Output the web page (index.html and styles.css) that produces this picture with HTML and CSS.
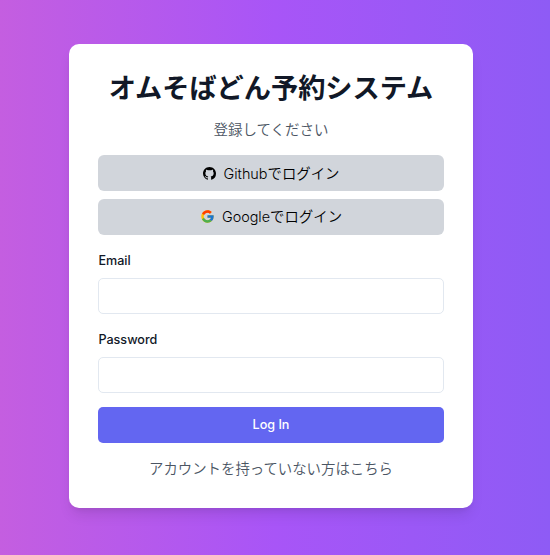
FILE: index.html
```html
<!DOCTYPE html>
<html lang="ja">
<head>
<meta charset="utf-8">
<title>オムそばどん予約システム</title>
<link rel="stylesheet" href="styles.css">
</head>
<body>
<main class="page">
  <section class="card">
    <h1 class="title">オムそばどん予約システム</h1>
    <p class="lead">登録してください</p>
    <div class="providers">
      <button class="btn provider" type="button">
        <svg class="icon" viewBox="0 0 16 16" aria-hidden="true"><path fill="#000" d="M8 0C3.58 0 0 3.58 0 8c0 3.54 2.29 6.53 5.47 7.59.4.07.55-.17.55-.38 0-.19-.01-.82-.01-1.49-2.01.37-2.53-.49-2.69-.94-.09-.23-.48-.94-.82-1.13-.28-.15-.68-.52-.01-.53.63-.01 1.08.58 1.23.82.72 1.21 1.87.87 2.33.66.07-.52.28-.87.51-1.07-1.78-.2-3.64-.89-3.64-3.95 0-.87.31-1.59.82-2.15-.08-.2-.36-1.02.08-2.12 0 0 .67-.21 2.2.82.64-.18 1.32-.27 2-.27s1.36.09 2 .27c1.53-1.04 2.2-.82 2.2-.82.44 1.1.16 1.92.08 2.12.51.56.82 1.27.82 2.15 0 3.07-1.87 3.75-3.65 3.95.29.25.54.73.54 1.48 0 1.07-.01 1.93-.01 2.2 0 .21.15.46.55.38A8.01 8.01 0 0 0 16 8c0-4.42-3.58-8-8-8z"/></svg>
        <span class="text">Github<span class="ja">でログイン</span></span>
      </button>
      <button class="btn provider provider-google" type="button">
        <svg class="icon" viewBox="3 3 42 42" aria-hidden="true"><path fill="#FFC107" d="M43.611 20.083H42V20H24v8h11.303c-1.649 4.657-6.08 8-11.303 8-6.627 0-12-5.373-12-12s5.373-12 12-12c3.059 0 5.842 1.154 7.961 3.039l5.657-5.657C34.046 6.053 29.268 4 24 4 12.955 4 4 12.955 4 24s8.955 20 20 20 20-8.955 20-20c0-1.341-.138-2.65-.389-3.917z"/><path fill="#FF3D00" d="M6.306 14.691l6.571 4.819C14.655 15.108 18.961 12 24 12c3.059 0 5.842 1.154 7.961 3.039l5.657-5.657C34.046 6.053 29.268 4 24 4 16.318 4 9.656 8.337 6.306 14.691z"/><path fill="#4CAF50" d="M24 44c5.166 0 9.86-1.977 13.409-5.192l-6.19-5.238C29.211 35.091 26.715 36 24 36c-5.202 0-9.619-3.317-11.283-7.946l-6.522 5.025C9.505 39.556 16.227 44 24 44z"/><path fill="#1976D2" d="M43.611 20.083H42V20H24v8h11.303c-.792 2.237-2.231 4.166-4.087 5.571l6.193 5.238C36.971 39.205 44 34 44 24c0-1.341-.138-2.65-.389-3.917z"/></svg>
        <span class="text">Google<span class="ja">でログイン</span></span>
      </button>
    </div>
    <form class="form">
      <label class="label" for="email">Email</label>
      <input class="input" id="email" type="email">
      <label class="label" for="password">Password</label>
      <input class="input" id="password" type="password">
      <button class="btn submit" type="button">Log In</button>
    </form>
    <p class="signup">アカウントを持っていない方はこちら</p>
  </section>
</main>
</body>
</html>
```
FILE: styles.css
```css
* { box-sizing: border-box; margin: 0; }
body {
  font-family: Inter, "Noto Sans CJK JP", sans-serif;
  color: #111827;
}
.page {
  height: 555px;
  padding: 44px 77px 0 69px;
  background: linear-gradient(to right, #c45ee0, #a855f7 50%, #8e5bf5);
}
.card {
  width: 404px;
  height: 464px;
  padding: 25px 29px 0;
  display: flex;
  flex-direction: column;
  background: #fff;
  border-radius: 10px;
  box-shadow: 0 9px 14px -3px rgba(0,0,0,.1), 0 4px 6px -4px rgba(0,0,0,.1);
}
.title {
  font-size: 27.2px;
  line-height: 40px;
  font-weight: 700;
  text-align: center;
  white-space: nowrap;
}
.lead {
  margin-top: 11px;
  font-size: 14.5px;
  line-height: 20px;
  font-weight: 350;
  text-align: center;
  color: #4b5563;
}
.providers {
  display: grid;
  gap: 8px;
  margin-top: 15px;
}
.btn {
  display: flex;
  align-items: center;
  justify-content: center;
  gap: 8px;
  width: 100%;
  height: 36px;
  border: 0;
  border-radius: 6px;
  font: 400 14.4px/20px Inter, "Noto Sans CJK JP", sans-serif;
}
.provider { padding-top: 2px; background: #d1d5db; color: #000; }
.provider-google { padding: 0 0 1px 1px; }
.text { font-weight: 350; }
.ja { font-weight: 350; }
.icon { width: 13px; height: 13px; margin-top: -1px; }
.form { display: flex; flex-direction: column; margin-top: 17px; }
.label { padding-left: .4px; font-size: 12.6px; line-height: 18px; font-weight: 500; }
.input {
  height: 36px;
  margin: 8px 0 17px;
  border: 1px solid #e2e8f0;
  border-radius: 5px;
  background: #fff;
}
.submit {
  margin-top: -3px;
  border-radius: 5px;
  background: #6366f1;
  color: #fff;
  font-size: 12.6px;
  font-weight: 500;
}
.signup {
  margin-top: 16px;
  font-size: 14.4px;
  line-height: 20px;
  font-weight: 350;
  text-align: center;
  color: #4b5563;
}
```
